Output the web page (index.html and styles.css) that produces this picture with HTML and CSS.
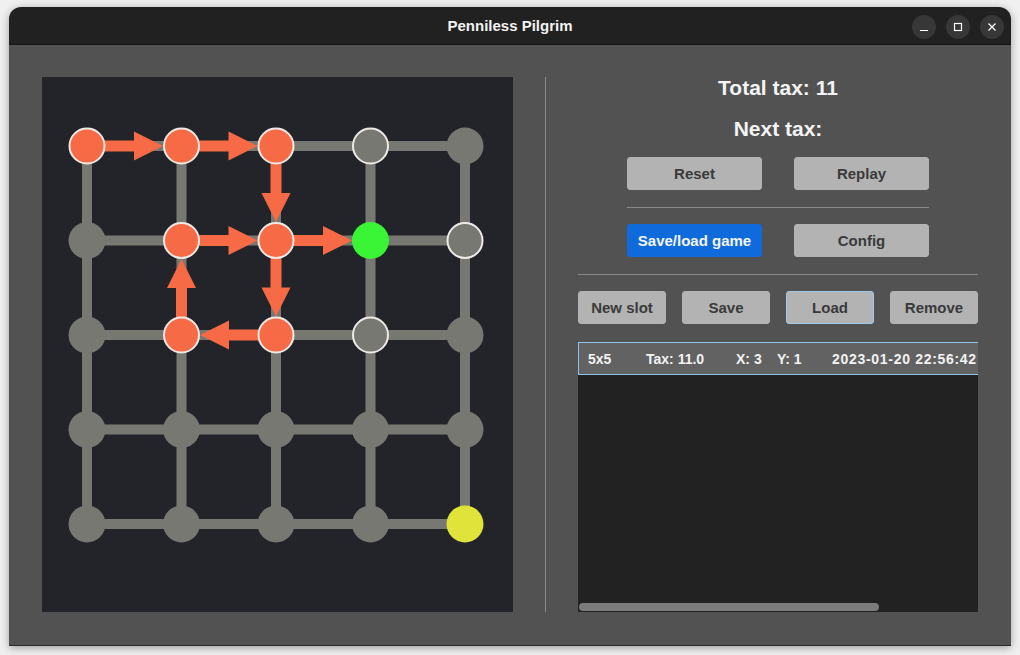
FILE: index.html
```html
<!DOCTYPE html>
<html>
<head>
<meta charset="utf-8">
<title>Penniless Pilgrim</title>
<link rel="stylesheet" href="styles.css">
</head>
<body>
<div class="window">
  <div class="titlebar">
    <div class="title">Penniless Pilgrim</div>
    <div class="controls">
      <span class="ctl"><svg width="24" height="24" viewBox="0 0 24 24"><line x1="8" y1="15.5" x2="16" y2="15.5" stroke="#fff" stroke-width="1.2"/></svg></span>
      <span class="ctl"><svg width="24" height="24" viewBox="0 0 24 24"><rect x="8.5" y="8.5" width="7" height="7" fill="none" stroke="#fff" stroke-width="1.2"/></svg></span>
      <span class="ctl"><svg width="24" height="24" viewBox="0 0 24 24"><path d="M8.5 8.5 L15.5 15.5 M15.5 8.5 L8.5 15.5" stroke="#fff" stroke-width="1.3"/></svg></span>
    </div>
  </div>
  <div class="content">
    <div class="board">
      <svg width="471" height="535" viewBox="0 0 471 535">
        <g stroke="#787873" stroke-width="10">
          <line x1="45" y1="69" x2="423" y2="69"/>
          <line x1="45" y1="163.5" x2="423" y2="163.5"/>
          <line x1="45" y1="258" x2="423" y2="258"/>
          <line x1="45" y1="352.5" x2="423" y2="352.5"/>
          <line x1="45" y1="447" x2="423" y2="447"/>
          <line x1="45" y1="69" x2="45" y2="447"/>
          <line x1="139.5" y1="69" x2="139.5" y2="447"/>
          <line x1="234" y1="69" x2="234" y2="447"/>
          <line x1="328.5" y1="69" x2="328.5" y2="447"/>
          <line x1="423" y1="69" x2="423" y2="447"/>
        </g>
        <g stroke="#f76a46" stroke-width="11" fill="#f76a46">
          <line x1="45" y1="69" x2="93" y2="69"/>
          <polygon stroke="none" points="92,54.5 121,69 92,83.5"/>
          <line x1="139.5" y1="69" x2="187.5" y2="69"/>
          <polygon stroke="none" points="186.5,54.5 215.5,69 186.5,83.5"/>
          <line x1="234" y1="69" x2="234" y2="117"/>
          <polygon stroke="none" points="219.5,116 234,145 248.5,116"/>
          <line x1="234" y1="163.5" x2="234" y2="211.5"/>
          <polygon stroke="none" points="219.5,210.5 234,239.5 248.5,210.5"/>
          <line x1="234" y1="258" x2="186" y2="258"/>
          <polygon stroke="none" points="187,243.5 158,258 187,272.5"/>
          <line x1="139.5" y1="258" x2="139.5" y2="210"/>
          <polygon stroke="none" points="125,211 139.5,182 154,211"/>
          <line x1="139.5" y1="163.5" x2="187.5" y2="163.5"/>
          <polygon stroke="none" points="186.5,149 215.5,163.5 186.5,178"/>
          <line x1="234" y1="163.5" x2="282" y2="163.5"/>
          <polygon stroke="none" points="281,149 310,163.5 281,178"/>
        </g>
        <g fill="#787873">
          <circle cx="423" cy="69" r="18.5"/>
          <circle cx="45" cy="163.5" r="18.5"/>
          <circle cx="423" cy="258" r="18.5"/>
          <circle cx="45" cy="258" r="18.5"/>
          <circle cx="45" cy="352.5" r="18.5"/>
          <circle cx="139.5" cy="352.5" r="18.5"/>
          <circle cx="234" cy="352.5" r="18.5"/>
          <circle cx="328.5" cy="352.5" r="18.5"/>
          <circle cx="423" cy="352.5" r="18.5"/>
          <circle cx="45" cy="447" r="18.5"/>
          <circle cx="139.5" cy="447" r="18.5"/>
          <circle cx="234" cy="447" r="18.5"/>
          <circle cx="328.5" cy="447" r="18.5"/>
        </g>
        <g fill="#787873" stroke="#efe9e6" stroke-width="2">
          <circle cx="328.5" cy="69" r="17.5"/>
          <circle cx="423" cy="163.5" r="17.5"/>
          <circle cx="328.5" cy="258" r="17.5"/>
        </g>
        <g fill="#f76a46" stroke="#efe9e6" stroke-width="2">
          <circle cx="45" cy="69" r="17.5"/>
          <circle cx="139.5" cy="69" r="17.5"/>
          <circle cx="234" cy="69" r="17.5"/>
          <circle cx="139.5" cy="163.5" r="17.5"/>
          <circle cx="234" cy="163.5" r="17.5"/>
          <circle cx="139.5" cy="258" r="17.5"/>
          <circle cx="234" cy="258" r="17.5"/>
        </g>
        <circle cx="328.5" cy="163.5" r="18.5" fill="#3af535"/>
        <circle cx="423" cy="447" r="18.5" fill="#dfe33a"/>
      </svg>
    </div>
    <div class="vdivider"></div>
    <div class="panel">
      <div class="heading first">Total tax: 11</div>
      <div class="heading second">Next tax:</div>
      <div class="pair">
        <button class="btn">Reset</button>
        <button class="btn">Replay</button>
      </div>
      <div class="hline short"></div>
      <div class="pair">
        <button class="btn primary">Save/load game</button>
        <button class="btn">Config</button>
      </div>
      <div class="hline"></div>
      <div class="quad">
        <button class="btn small">New slot</button>
        <button class="btn small">Save</button>
        <button class="btn small focused">Load</button>
        <button class="btn small">Remove</button>
      </div>
      <div class="list">
        <div class="row selected">
          <span class="c1">5x5</span>
          <span class="c2">Tax: 11.0</span>
          <span class="c3">X: 3</span>
          <span class="c4">Y: 1</span>
          <span class="c5">2023-01-20 22:56:42</span>
        </div>
        <div class="hscroll"></div>
      </div>
    </div>
  </div>
</div>
</body>
</html>
```
FILE: styles.css
```css
html, body {
  margin: 0;
  padding: 0;
}
body {
  background: #f0f0f0;
  width: 1020px;
  height: 655px;
  overflow: hidden;
  font-family: "Liberation Sans", Arial, sans-serif;
}
.window {
  margin: 7px 0 0 9px;
  width: 1002px;
  height: 639px;
  border-radius: 12px 12px 0 0;
  box-shadow: 0 2px 9px rgba(0,0,0,0.35);
  display: flex;
  flex-direction: column;
  overflow: hidden;
  border-bottom: 1px solid #2a2a2a;
  box-sizing: border-box;
}
.titlebar {
  height: 37px;
  background: #212121;
  border-bottom: 1px solid #141414;
  position: relative;
  display: flex;
  align-items: center;
  justify-content: center;
  flex: none;
}
.title {
  color: #f2f2f2;
  font-weight: bold;
  font-size: 15px;
}
.controls {
  position: absolute;
  right: 7px;
  top: 8px;
  display: flex;
  gap: 10px;
}
.ctl {
  width: 24px;
  height: 24px;
  border-radius: 50%;
  background: #373737;
  display: block;
}
.ctl svg { display: block; }
.content {
  flex: 1;
  background: #525252;
  display: flex;
  padding: 32px 33px 33px 33px;
}
.board {
  width: 471px;
  height: 535px;
  background: #232429;
  flex: none;
}
.board svg { display: block; }
.vdivider {
  width: 1px;
  background: #8a8a8a;
  margin: 0 32px;
  flex: none;
}
.panel {
  width: 400px;
  display: flex;
  flex-direction: column;
  align-items: center;
  flex: none;
}
.heading {
  color: #f4f4f4;
  font-weight: bold;
  font-size: 21px;
  line-height: 22px;
}
.second {
  margin-top: 19px;
}
.pair {
  display: flex;
  gap: 32px;
  margin-top: 17px;
}
.btn {
  font-family: "Liberation Sans", Arial, sans-serif;
  font-weight: bold;
  font-size: 15px;
  color: #3a3a3a;
  background: #b3b3b3;
  border: 1px solid #b3b3b3;
  border-radius: 3px;
  width: 135px;
  height: 33px;
  padding: 0;
  margin: 0;
}
.btn.primary {
  background: #0f6bdb;
  border-color: #0f6bdb;
  color: #f5f5f5;
}
.btn.small {
  width: 88px;
}
.btn.focused {
  border-color: #9ccbef;
}
.hline {
  height: 1px;
  background: #8a8a8a;
  width: 400px;
  margin-top: 17px;
}
.hline.short {
  width: 302px;
}
.hline + .pair { margin-top: 16px; }
.quad {
  display: flex;
  gap: 16px;
  margin-top: 16px;
}
.list {
  margin-top: 18px;
  width: 400px;
  flex: 1;
  background: #222222;
  position: relative;
  overflow: hidden;
}
.row {
  height: 33px;
  box-sizing: border-box;
  display: flex;
  align-items: center;
  white-space: nowrap;
  color: #f2f2f2;
  font-weight: bold;
  font-size: 14px;
  padding-left: 9px;
}
.row.selected {
  background: #626262;
  border: 1px solid #8ec5ef;
  border-right: none;
}
.row span { flex: none; }
.c1 { width: 58px; }
.c2 { width: 90px; }
.c3 { width: 41px; }
.c4 { width: 55px; }
.c5 { letter-spacing: 0.7px; }
.hscroll {
  position: absolute;
  left: 1px;
  bottom: 1px;
  width: 300px;
  height: 8px;
  border-radius: 4px;
  background: #7b7b7b;
}
```
